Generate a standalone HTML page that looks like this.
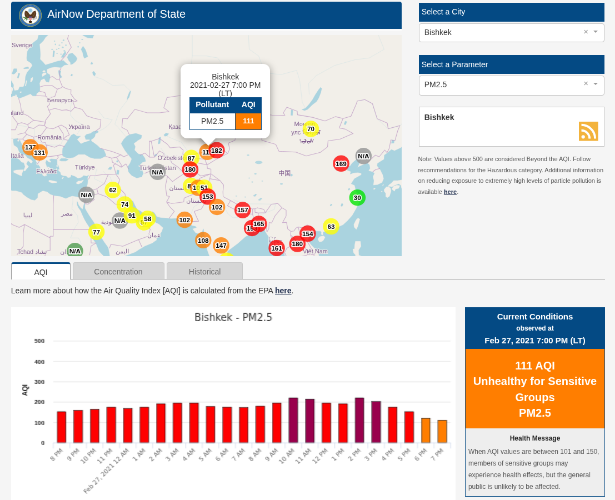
<!DOCTYPE html>
<html lang="en"><head><meta charset="utf-8"><title>AirNow Department of State</title>
<style>
html,body{margin:0;padding:0;}
html{width:615px;height:500px;overflow:hidden;}
body{width:615px;height:500px;overflow:hidden;background:#f5f5f5;font-family:"Liberation Sans", Arial, sans-serif;color:#333;}
#w{position:absolute;left:0;top:0;width:1107px;height:900px;transform:scale(0.555556);transform-origin:0 0;will-change:transform;overflow:hidden;}
#w div{box-sizing:border-box;}
.abs{position:absolute;}
.hd{position:absolute;background:#044a84;color:#fff;}
.sel{position:absolute;background:#fff;border:1.3px solid #c2c2c2;border-radius:4px;}
.tab{position:absolute;border:1px solid #c8c8c8;border-bottom:none;border-radius:4px 4px 0 0;background:#d6d6d6;color:#6a6a6a;font-size:14px;text-align:center;}
</style></head><body><div id="w">
<div class="hd" style="left:19.62px;top:2.88px;width:703.08px;height:49.14px;border-radius:4px 4px 0 0;"></div>
<div class="abs" style="left:19.62px;top:52.02px;width:703.08px;height:4.14px;background:#fafafa;"></div>
<svg class="abs" style="left:34.019999999999996px;top:7.02px" width="41.4" height="41.4" viewBox="-21 -21 42 42">
<circle r="20.3" fill="#2c68ae" stroke="#9aa45e" stroke-width="1.1"/>
<circle r="18" fill="none" stroke="#5d8fc8" stroke-width="2.2" stroke-dasharray="1.1 1.3"/>
<circle r="15.6" fill="#fdfdfd" stroke="#b9b36a" stroke-width="0.9"/>
<circle cy="-8.8" r="3.9" fill="#a9d3e8"/><circle cy="-8.8" r="2.2" fill="#8fc4e0"/>
<path d="M-2.2 -2.5 C-3.5 -6 -6 -8.6 -9.6 -8.2 C-11.2 -5 -11 0 -9 3.2 C-7.2 5.6 -4.6 5.8 -2.6 4.6 Z" fill="#5a3a1f"/>
<path d="M2.2 -2.5 C3.5 -6 6 -8.6 9.6 -8.2 C11.2 -5 11 0 9 3.2 C7.2 5.6 4.6 5.8 2.6 4.6 Z" fill="#5a3a1f"/>
<path d="M-9.6 -8.2 C-8 -4 -6.5 0 -4 3 M9.6 -8.2 C8 -4 6.5 0 4 3" stroke="#8a6a45" stroke-width="0.8" fill="none"/>
<path d="M-2.6 -3 h5.2 v8 l-2.6 7 l-2.6 -7 z" fill="#4a2f18"/>
<ellipse cx="0" cy="-3.2" rx="1.9" ry="2.1" fill="#f4f1ea"/><path d="M0.8 -3.2 l2.2 0.7 l-2.2 0.6z" fill="#d9a93a"/>
<path d="M-2.9 2 h5.8 v3.8 c0 2.3 -2.9 3.6 -2.9 3.6 s-2.9 -1.3 -2.9 -3.6 z" fill="#e2625c"/>
<path d="M-1.75 4 v4.4 M-0.6 4 v5 M0.6 4 v5 M1.75 4 v4.4" stroke="#f6e7e4" stroke-width="0.5"/>
<rect x="-2.9" y="2" width="5.8" height="2" fill="#34478f"/>
<path d="M-4 7 C-7 6.5 -10 5.5 -13 3 M-6 6.4 l-1.5 -2.6 M-8.2 5.6 l-1.8 -2.2 M-10.4 4.6 l-2 -1 M-6.6 6.6 l-1 2 M-9 5.6 l-1.6 1.8" stroke="#4a7f3c" stroke-width="1.2" fill="none" stroke-linecap="round"/>
<path d="M4 7.4 L12.5 3.2 M4.6 8.2 L13 5 M4 6.6 L11.6 1.6" stroke="#8d8d8d" stroke-width="0.7" fill="none"/>
<path d="M-3 10.5 h6 l-1 3.2 h-4z" fill="#3c2714"/>
</svg>
<div style="position:absolute;left:85.14px;top:11.75px;font-size:20px;line-height:26px;white-space:nowrap;color:#fff;">AirNow Department of State</div>
<div class="abs" style="left:19.62px;top:63.0px;width:703.08px;height:398.34px;overflow:hidden;background:#f2efe9;">
<svg width="703.08" height="398.34" viewBox="10.9 35.0 390.6 221.3" style="position:absolute;left:0;top:0;display:block">
<rect x="10.9" y="35.0" width="390.6" height="221.3" fill="#f2efe9"/>
<path d="M125.7 136.7L117.8 127.4L114.6 124.1L119.4 110.3L127.2 100.0L129.4 90.2L123.9 84.9L112.4 85.4L102.3 79.2L94.2 76.6M98.2 131.2L102.6 129.3L108.3 125.0L112.1 119.7L103.6 117.8L98.2 110.8M76.7 134.4L79.6 129.8L84.9 128.4L83.0 125.0L75.1 120.7L70.4 115.3L70.4 107.7L71.6 100.4M166.8 136.2L173.1 139.0L181.0 142.1L189.9 154.3L200.6 158.9M160.5 147.8L166.8 157.2L173.1 164.7L182.6 173.2L193.0 174.4M192.1 20.4L192.1 55.9L206.0 55.9L217.4 57.9L226.8 71.6L236.3 91.8L238.8 101.0M192.1 55.9L189.9 73.4L198.4 81.1L206.0 91.8L217.0 106.2L227.5 115.8L238.8 127.4M247.4 20.4L249.0 49.3L258.4 55.9L264.8 72.8L267.9 86.2L262.9 98.8M264.8 72.8L280.6 74.6L296.4 70.4L299.5 80.5L302.1 102.5L305.2 108.3M372.2 20.4L383.9 49.3L369.1 57.9L354.5 59.8L334.3 65.5L315.7 75.8L308.4 83.4L309.0 94.5M407.0 115.3L400.4 125.5L387.7 128.8L377.0 118.8L372.2 103.6L364.6 99.6L358.0 101.0M264.1 226.1L257.5 217.4L260.0 215.0L274.2 209.3L275.2 204.2L261.6 203.9L242.6 203.9L233.2 199.5M257.8 225.0L252.4 220.9L239.5 217.1L232.8 217.8L227.8 213.9L221.2 201.7M187.3 222.6L189.9 215.7L193.7 206.8L198.4 203.9L200.0 192.1L202.5 186.4L211.0 180.6M127.0 199.9L123.8 197.7L117.8 192.1L114.3 189.1L110.2 177.5L102.6 171.2M123.8 197.7L114.0 194.0L108.3 186.4L102.0 182.6L94.1 178.7L96.6 168.8M72.6 196.2L72.6 201.3L71.7 208.6L77.3 215.7L78.0 222.6L73.6 229.5L70.4 237.9L78.3 237.9L81.1 243.9L76.7 250.9L79.9 256.4M67.6 140.3L62.5 139.9L60.3 145.2L45.7 144.8L38.8 142.1L34.0 139.0L34.0 128.4L27.7 126.9L16.7 125.0" fill="none" stroke="#aad3df" stroke-width="0.45" stroke-opacity="0.32" stroke-linejoin="round"/>
<path d="M38.9 33.0L37.3 39.5L32.5 43.0L29.4 47.9L27.2 51.3L26.5 57.9L26.9 60.5L31.0 63.1L32.2 65.6L30.0 68.7L26.9 72.4L25.3 76.6L24.9 82.2L23.5 86.5L22.3 87.0L19.4 87.0L18.0 90.2L14.2 90.7L13.1 87.5L13.3 84.9L10.2 79.4L8.2 74.8L5.7 73.6L6.7 97.9L9.5 97.9L12.9 95.9L16.0 95.4L18.7 98.4L24.0 96.4L30.2 93.8L32.5 95.9L35.7 95.9L36.5 93.3L39.5 91.2L39.7 87.5L39.2 83.2L40.6 80.0L44.0 78.3L46.0 81.6L48.6 82.2L49.7 77.7L49.6 74.8L46.8 73.0L46.5 69.3L50.6 67.5L54.7 66.8L61.0 67.5L64.2 65.0L67.9 64.6L65.7 63.1L63.2 60.5L57.8 61.1L51.5 63.1L45.2 65.0L43.0 62.4L39.8 59.2L40.1 54.6L39.8 49.3L39.2 44.4L43.0 40.9L45.2 37.4L49.9 33.0ZM11.7 73.6L13.6 68.7L16.4 68.7L16.7 71.2L14.5 73.6L13.0 74.2ZM17.1 77.7L18.3 73.0L19.6 73.6L18.1 78.3ZM23.1 68.1L27.8 66.8L28.8 68.4L24.0 68.7ZM70.5 64.6L72.7 63.7L75.8 61.1L76.8 58.6L75.8 56.6L72.1 53.0L68.6 54.0L67.0 57.3L68.6 60.5L70.2 62.4ZM84.1 58.2L87.5 56.6L86.3 52.6L85.0 49.3L82.8 46.2L80.9 49.3L82.5 52.6L83.1 55.9ZM80.9 32.2L82.5 35.2L87.2 37.7L92.3 38.1L93.5 35.2L98.3 32.2ZM58.1 70.6L60.7 70.9L60.0 74.2L61.7 77.2L59.8 77.7L58.8 74.8ZM92.3 72.4L93.5 71.2L95.4 73.6L94.5 76.0L92.9 74.8ZM61.0 57.3L62.9 54.0L65.1 51.3L65.7 53.3L63.2 57.3ZM52.5 56.6L53.1 50.6L54.4 51.3L53.7 56.6ZM70.5 75.7L71.4 73.9L72.4 74.8L71.7 76.0ZM90.4 64.0L91.3 62.1L92.6 63.1L92.0 64.3ZM127.5 96.3L129.4 91.9L130.7 90.7L129.8 94.0L128.8 97.3L126.9 99.5ZM62.5 148.3L64.4 145.6L67.9 140.3L71.0 135.3L73.6 133.9L76.7 136.2L80.2 136.2L76.7 139.4L79.9 143.0L80.8 143.9L84.6 142.1L89.4 140.8L89.7 139.4L85.6 139.4L84.6 136.2L86.2 134.4L90.3 133.5L92.8 131.6L97.3 130.9L98.2 132.1L95.0 133.9L94.7 136.2L93.2 138.1L90.9 139.6L90.9 140.8L93.2 142.5L97.3 145.6L99.5 147.8L103.6 150.0L105.5 154.3L105.5 156.0L100.4 158.5L94.1 158.5L89.4 157.2L84.6 154.3L78.3 154.3L73.6 157.2L68.8 158.1L66.0 157.7L62.5 156.0L62.2 152.1ZM59.3 160.2L60.9 158.5L65.3 158.5L68.2 159.5L65.7 161.0L60.9 161.0ZM163.6 134.9L165.8 133.0L168.4 133.7L166.8 135.8L164.6 136.2ZM157.9 143.9L158.9 137.6L160.5 137.1L159.8 143.4ZM154.1 155.5L155.7 153.9L157.0 154.7L155.4 156.4ZM301.7 109.5L305.2 108.3L309.0 104.1L312.2 99.9L315.3 94.5L318.5 89.6L320.4 87.3L321.5 88.5L320.4 92.9L318.5 97.8L316.3 101.5L312.2 104.6L310.6 106.2L307.4 109.3L304.3 110.5ZM290.7 115.3L291.0 109.8L292.6 110.3L292.3 115.3ZM265.4 116.8L267.3 115.3L269.2 116.1L267.6 117.3ZM343.8 124.3L345.0 121.2L346.6 121.7L345.4 124.6ZM391.2 143.2L391.8 139.9L394.0 140.3L393.7 143.0ZM288.8 175.2L290.7 173.8L292.6 175.0L291.0 176.3ZM340.6 206.0L341.6 203.2L342.8 204.2L341.9 206.4ZM347.9 189.8L348.8 187.9L349.8 189.1L348.8 190.2ZM352.9 197.7L353.9 195.8L355.2 196.9L354.2 197.8ZM329.9 205.7L330.8 203.9L331.8 204.6L330.8 206.0ZM107.7 169.2L109.6 167.0L111.8 167.2L110.8 169.6ZM116.2 174.0L116.9 170.0L118.8 170.4L118.4 174.4ZM116.2 161.8L116.9 160.2L118.1 161.4L117.2 162.2ZM78.9 168.8L79.2 166.7L80.5 167.2L80.2 168.8ZM259.1 199.1L260.7 198.0L261.9 198.8L260.3 199.5ZM254.3 195.1L255.3 194.1L256.5 194.7L255.3 195.4ZM237.3 128.4L239.5 126.9L242.3 127.4L240.1 128.6ZM230.9 136.7L232.2 135.1L233.5 136.0L231.9 137.1ZM5.6 136.7L12.9 139.0L17.6 138.5L17.0 140.8L17.9 142.1L19.5 139.9L22.0 145.2L25.8 147.8L31.2 151.7L35.3 154.7L35.3 157.2L35.3 161.0L37.2 163.9L39.4 166.7L40.7 169.6L41.3 172.0L42.3 175.6L44.8 176.7L45.7 175.6L47.0 176.7L46.1 173.2L48.3 172.0L49.9 172.0L49.9 170.0L46.7 166.7L46.4 165.5L45.4 162.7L46.4 160.2L48.0 161.8L49.9 162.7L51.1 161.8L49.2 159.7L51.1 158.9L55.9 159.3L56.8 160.2L56.8 162.4L56.8 164.7L58.1 165.5L59.0 169.2L57.1 169.6L60.0 172.4L60.6 174.8L63.1 176.0L66.0 176.3L67.6 177.9L70.4 177.5L71.0 175.2L75.1 176.7L77.7 178.5L81.5 177.5L83.4 175.6L86.5 176.3L88.4 175.2L87.1 177.9L87.5 180.6L87.1 184.5L86.2 186.8L84.6 191.0L83.7 194.0L82.4 196.6L80.8 197.3L76.1 196.6L72.0 195.8L68.8 196.9L65.7 198.4L60.0 196.2L53.6 195.4L49.9 194.0L47.0 191.7L42.6 190.6L37.5 193.6L37.2 197.7L34.7 200.2L30.9 199.5L26.5 196.9L22.7 194.0L22.0 192.5L15.7 190.6L11.9 190.6L9.1 189.5L5.6 188.3ZM76.9 201.5L77.0 205.0L78.3 207.8L80.2 210.3L80.8 211.4L82.4 215.3L84.6 219.9L86.5 223.0L90.6 229.5L91.9 234.6L91.6 237.6L95.7 243.0L98.8 250.9L101.1 253.5L105.2 257.7L109.6 257.7L109.0 253.5L108.0 248.2L107.1 246.6L103.3 241.3L99.8 235.6L96.9 231.2L96.3 227.8L93.5 222.3L90.9 218.5L88.7 215.3L86.2 211.1L84.6 208.2L84.6 203.2L84.0 203.5L82.4 209.5L80.2 207.5L78.3 205.0L77.3 202.1ZM119.4 259.4L124.1 256.4L129.2 254.5L135.2 252.2L139.0 249.6L144.7 246.3L151.9 243.3L156.7 240.0L156.4 237.3L159.5 234.9L161.7 231.5L163.0 227.8L158.9 224.0L153.2 221.2L152.3 218.8L152.3 217.1L152.4 214.4L151.9 215.0L151.0 216.4L148.8 218.1L145.9 220.9L144.7 221.9L141.5 222.3L138.3 222.3L136.4 220.5L137.1 219.2L137.1 216.4L135.8 215.3L134.7 217.1L134.6 220.2L133.0 218.1L132.7 214.2L131.1 212.1L128.2 210.0L127.6 206.8L125.7 203.5L125.7 201.3L128.5 200.2L129.5 199.9L132.7 201.3L134.6 205.3L136.8 209.3L140.2 211.1L142.8 213.2L146.2 213.9L147.5 213.9L151.9 211.6L154.1 212.8L156.7 216.9L160.5 217.8L165.5 218.1L170.9 218.8L174.7 218.5L178.2 218.5L183.5 217.8L185.8 219.9L187.0 223.0L189.5 224.0L191.8 225.7L195.2 226.4L196.2 227.4L192.1 228.8L195.2 232.9L198.4 233.9L201.9 232.2L203.1 228.8L203.8 232.9L204.1 239.6L205.7 245.3L207.2 251.2L210.4 259.7L227.8 259.7L227.2 254.5L227.5 251.2L230.6 248.9L234.1 246.3L237.3 243.9L245.2 236.9L248.0 235.3L249.0 231.2L253.7 230.9L258.4 229.5L260.3 227.8L264.1 228.5L264.8 231.5L267.6 235.9L271.1 241.3L272.0 249.6L275.8 250.2L278.4 247.9L280.6 246.3L282.5 247.9L284.4 256.1L285.3 259.7L287.8 259.7L289.7 258.7L290.4 258.1L291.9 257.7L292.9 258.4L292.9 259.7L319.4 259.7L319.1 256.8L318.2 251.9L316.0 249.2L314.1 247.9L310.9 244.6L308.1 240.6L308.7 236.9L311.2 233.6L315.3 231.2L320.1 231.2L321.0 232.2L320.7 234.2L322.0 235.3L323.2 234.6L322.9 232.2L326.4 231.2L332.7 229.2L334.9 228.5L342.8 225.0L347.3 220.9L352.0 215.7L356.1 208.6L359.3 201.7L356.4 200.2L359.3 197.7L358.9 195.1L356.1 191.7L354.5 185.3L351.0 183.7L354.2 178.7L361.2 174.8L361.2 173.2L357.7 172.4L353.3 172.8L350.1 174.0L350.7 171.6L346.9 170.0L346.3 166.7L350.1 165.9L352.0 163.1L356.4 159.3L359.6 159.7L360.2 161.0L357.1 167.6L359.6 166.3L366.9 163.1L369.1 164.7L369.7 168.4L368.1 170.8L372.2 172.0L374.1 173.2L372.5 176.7L373.5 180.6L372.9 185.3L377.3 184.9L382.0 182.6L383.6 178.7L382.7 174.8L380.1 169.6L377.0 165.9L377.3 163.5L378.5 162.7L383.9 159.3L384.2 155.1L387.1 153.0L391.2 149.6L394.3 150.9L400.7 147.8L407.0 141.2L407.0 269.0L119.4 269.0ZM130.0 134.5L135.7 133.4L141.3 135.3L140.9 138.3L137.0 140.7L133.5 143.5L135.0 146.7L134.2 150.0L138.1 154.0L142.2 154.8L144.6 158.1L145.4 161.3L142.2 162.2L139.7 164.6L141.3 168.7L143.0 173.5L141.3 176.8L136.5 177.9L131.6 175.5L128.3 171.9L127.5 167.0L130.0 163.0L131.6 158.9L128.3 154.8L125.1 150.8L122.6 146.7L121.0 143.5L123.5 139.4L126.7 136.1Z" fill="#aad3df" stroke="#aad3df" stroke-width="0.3" stroke-linejoin="round"/>
<ellipse cx="247.9" cy="155.1" rx="1.2" ry="0.7" fill="#aad3df" fill-opacity="0.85"/><ellipse cx="258.5" cy="162.4" rx="3.6" ry="1.6" fill="#aad3df" fill-opacity="0.85"/><ellipse cx="255.2" cy="173.8" rx="1.2" ry="0.8" fill="#aad3df" fill-opacity="0.85"/><ellipse cx="254.4" cy="195.7" rx="1.3" ry="0.8" fill="#aad3df" fill-opacity="0.85"/><ellipse cx="259.3" cy="199.8" rx="1.2" ry="0.7" fill="#aad3df" fill-opacity="0.85"/><ellipse cx="281.2" cy="183.9" rx="1.4" ry="0.8" fill="#aad3df" fill-opacity="0.85"/><ellipse cx="55.2" cy="44.4" rx="0.7" ry="0.8" fill="#aad3df" fill-opacity="0.85"/><ellipse cx="58.4" cy="48.4" rx="0.9" ry="0.55" fill="#aad3df" fill-opacity="0.85"/><ellipse cx="61.7" cy="42.8" rx="0.7" ry="0.55" fill="#aad3df" fill-opacity="0.85"/><ellipse cx="64.1" cy="50.9" rx="0.9" ry="0.8" fill="#aad3df" fill-opacity="0.85"/><ellipse cx="56.8" cy="53.3" rx="0.7" ry="0.55" fill="#aad3df" fill-opacity="0.85"/><ellipse cx="51.9" cy="49.3" rx="0.9" ry="0.55" fill="#aad3df" fill-opacity="0.85"/><ellipse cx="65.7" cy="45.2" rx="0.7" ry="0.8" fill="#aad3df" fill-opacity="0.85"/><ellipse cx="60.8" cy="54.1" rx="0.9" ry="0.55" fill="#aad3df" fill-opacity="0.85"/><ellipse cx="54.3" cy="41.1" rx="0.7" ry="0.55" fill="#aad3df" fill-opacity="0.85"/><ellipse cx="63.3" cy="40.3" rx="0.9" ry="0.8" fill="#aad3df" fill-opacity="0.85"/><ellipse cx="79.5" cy="42.8" rx="0.7" ry="0.55" fill="#aad3df" fill-opacity="0.85"/><ellipse cx="82.0" cy="39.5" rx="0.9" ry="0.55" fill="#aad3df" fill-opacity="0.85"/><ellipse cx="77.9" cy="46.8" rx="0.7" ry="0.8" fill="#aad3df" fill-opacity="0.85"/><ellipse cx="59.2" cy="45.2" rx="0.9" ry="0.55" fill="#aad3df" fill-opacity="0.85"/><ellipse cx="56.5" cy="49.3" rx="0.7" ry="0.55" fill="#aad3df" fill-opacity="0.85"/><ellipse cx="62.5" cy="47.3" rx="0.9" ry="0.8" fill="#aad3df" fill-opacity="0.85"/><ellipse cx="252" cy="182" rx="0.8" ry="0.6" fill="#aad3df" fill-opacity="0.85"/><ellipse cx="249" cy="178" rx="0.7" ry="0.5" fill="#aad3df" fill-opacity="0.85"/><ellipse cx="262" cy="181" rx="0.7" ry="0.5" fill="#aad3df" fill-opacity="0.85"/><ellipse cx="245" cy="197" rx="0.8" ry="0.5" fill="#aad3df" fill-opacity="0.85"/><ellipse cx="236" cy="196" rx="0.7" ry="0.5" fill="#aad3df" fill-opacity="0.85"/>
<path d="M6.2 88.1L11.8 87.0L12.9 89.1L11.8 91.8L11.5 93.8L6.5 93.8ZM41.7 74.8L42.7 73.0L45.8 72.7L46.1 74.2L43.9 75.4L42.3 76.6ZM42.3 71.2L43.9 70.2L45.2 71.2L44.2 72.4L42.7 72.1ZM30.2 81.6L30.7 78.3L32.6 77.2L32.4 80.0L30.9 82.2ZM24.8 85.9L26.1 80.5L26.7 80.5L25.7 85.9ZM19.7 92.3L20.9 91.2L21.1 92.5L20.0 92.8ZM14.8 96.4L15.7 94.3L16.7 95.9L15.8 96.6ZM5.6 147.8L7.2 150.4L9.1 152.6L12.6 155.1L15.1 157.4L18.9 159.3L21.4 162.2L23.6 162.7L24.9 166.7L23.6 170.0L23.5 171.0L24.9 171.0L26.5 168.8L28.4 166.7L26.1 163.9L27.7 160.6L30.9 163.3L32.5 161.8L30.9 159.7L27.4 158.1L24.6 154.7L22.0 154.7L18.9 152.1L17.0 147.4L13.5 145.2L12.9 141.6L12.9 139.0L5.6 136.7ZM13.3 170.8L16.0 170.0L23.3 169.6L21.7 173.6L21.7 176.0L19.2 175.2L13.5 172.4ZM48.6 180.3L50.5 180.3L55.5 181.4L57.1 181.8L56.5 182.6L52.1 183.0L48.6 181.8ZM76.1 182.6L78.0 181.0L80.5 181.0L83.4 179.9L81.5 182.6L78.3 184.1L76.4 183.7ZM61.5 178.1L63.1 176.9L63.3 177.5L62.0 179.1ZM46.7 167.0L48.0 166.7L50.5 168.4L51.7 170.8L50.5 170.6L48.6 168.6ZM55.9 165.9L57.1 165.1L58.1 166.3L56.8 166.7ZM55.9 169.8L56.2 168.4L56.8 168.8L56.6 170.0ZM35.9 163.7L36.9 163.5L37.5 165.1L36.9 165.1ZM38.5 170.4L38.9 169.0L39.7 170.0L39.1 170.6ZM317.5 239.0L319.1 242.0L321.7 241.6L323.2 240.3L324.8 237.3L323.6 235.9L320.7 236.3L319.1 236.9ZM358.0 218.1L359.6 219.2L357.7 226.1L356.1 229.5L353.9 227.1L353.6 224.4L355.5 220.5L356.7 218.8ZM355.2 241.3L360.2 241.3L360.8 246.3L358.3 250.2L358.6 255.1L361.2 256.1L362.7 257.7L361.2 261.0L355.2 261.0L355.2 254.8L353.3 252.8L352.6 248.9L354.2 248.9L354.5 244.6ZM383.9 189.5L386.1 186.8L388.0 186.8L390.2 187.9L390.9 191.0L389.3 196.2L387.1 197.7L385.5 196.6L385.5 193.2L383.9 191.3ZM387.7 186.4L388.7 184.9L391.2 183.0L393.4 180.6L397.5 180.5L401.3 179.9L403.5 179.9L404.1 177.5L407.0 174.0L407.0 184.5L403.8 186.4L401.3 188.3L400.7 185.3L398.5 183.7L394.3 185.3L391.8 186.8L389.6 186.4ZM391.5 189.1L393.4 186.2L396.6 185.1L399.7 185.7L398.5 188.3L395.3 189.1L394.3 191.2L392.8 190.2ZM372.9 189.1L374.1 188.1L375.2 188.5L374.1 189.5ZM357.4 194.9L359.3 195.8L358.0 195.6ZM359.6 201.3L360.5 200.6L360.8 201.3L359.9 201.7ZM148.8 213.4L151.6 212.1L151.9 212.5L149.7 213.7ZM133.4 216.0L133.9 214.8L134.1 216.0ZM159.2 235.6L160.2 234.1L160.3 234.6L159.5 235.8ZM382.3 186.0L382.8 183.9L383.3 184.1L382.8 186.0ZM380.8 191.7L381.7 190.8L382.2 191.3L381.2 191.9Z" fill="#f2efe9" stroke="#f2efe9" stroke-width="0.2" stroke-linejoin="round"/>
<path d="M49.0 23.9L47.4 33.0M60.4 61.1L65.1 55.9L71.1 47.2L67.3 38.8L68.9 33.0M61.0 67.8L59.1 71.2L59.8 77.7L59.2 79.4M49.3 77.4L52.5 76.6L56.4 79.4L59.2 79.4L62.1 86.5L61.5 87.5M39.5 87.0L45.0 85.4L51.6 85.4L57.1 89.1L61.5 87.5L62.1 86.5L66.0 88.6L70.8 89.7L70.6 93.8L74.1 98.9L77.0 100.9L72.9 101.9L74.5 107.3L70.7 111.3L66.3 109.8L61.5 110.3L54.6 108.3L48.6 110.3M57.1 89.1L54.6 96.4L47.8 98.2L49.4 104.4L47.2 106.3L48.6 110.3L50.2 113.8L45.4 120.2L44.2 125.5M35.6 95.6L45.5 96.1L47.8 98.2M39.4 91.2L44.7 92.5L45.5 96.1M18.4 98.4L20.3 104.8L21.4 112.8L12.2 116.3L17.6 123.6L21.4 122.7L27.4 124.6L33.4 120.2L28.4 116.3L21.4 112.8M33.4 120.2L45.4 122.2L44.2 125.5L38.8 125.0L33.4 128.4L28.4 127.4L27.4 124.6M5.6 129.8L15.1 129.8L17.6 123.6M28.4 127.4L24.9 132.6L26.5 134.4L33.4 137.1L38.2 136.2L41.0 134.9L46.4 127.7L44.2 125.5M17.3 134.4L24.9 132.6M17.0 139.0L22.4 139.0L26.5 134.4M46.4 127.7L52.7 128.8L58.1 126.2L63.1 133.9L63.1 139.2L67.9 140.3M58.1 126.2L60.9 125.0L66.0 127.9L69.1 134.9L65.5 136.7L63.1 139.2M38.2 136.2L41.6 142.1L45.1 142.5L45.7 144.8L46.5 146.5M45.7 144.8L54.3 147.2L59.3 145.0L64.4 146.7M33.4 137.1L34.0 141.6L35.9 145.6L34.7 147.8L38.2 150.9L39.1 154.7L44.8 153.0L46.5 146.5L44.8 153.0L46.4 157.0L57.1 155.5L62.5 154.3M22.4 139.0L23.9 140.3L27.4 140.3L34.0 141.6M24.6 145.6L29.6 150.0L32.5 152.1L34.7 147.8M35.3 154.7L37.5 152.1L39.1 154.7L40.4 159.1L37.2 163.9M40.4 159.1L46.4 157.0L57.1 155.5L58.1 157.2L56.2 159.7M74.5 107.3L81.8 109.3L86.5 115.8L94.1 118.3L100.7 119.7L99.8 127.9L94.7 131.6M100.4 148.3L112.4 151.7L120.6 154.7L123.5 156.8L127.6 154.9M105.3 156.4L111.5 158.1L116.2 157.2L120.6 154.7M111.5 158.1L112.1 162.2L115.6 163.9L113.1 165.1L114.6 169.6L115.6 174.0L108.0 174.4L103.6 174.4L95.7 175.4L90.0 175.6L88.3 179.3M116.2 157.2L121.0 164.7L121.0 167.2L125.7 163.9L128.5 169.0M115.6 163.9L121.0 167.2M115.6 174.0L119.4 179.5L117.5 186.4L124.8 194.0L125.7 201.3M108.0 174.4L104.2 183.4L96.6 188.7L87.8 191.7L86.5 189.3L84.9 189.8M96.6 188.7L97.9 193.6L90.9 195.8L94.1 199.5L87.8 204.2L84.5 203.7M97.9 193.6L106.7 196.9L115.3 204.2L121.0 204.6L124.8 206.8L127.0 206.8M121.0 204.6L123.8 201.0L125.7 201.3M82.2 196.9L84.5 203.2M86.2 192.5L86.4 195.8L84.6 202.8M53.5 195.3L53.0 204.2L53.0 229.5L53.0 236.3L49.9 236.3L49.9 237.9L49.9 250.5L46.4 250.9L43.5 259.4M53.0 229.5L73.6 229.5L78.9 229.7L81.8 229.5L90.6 229.5M49.9 237.9L24.3 224.5L21.4 226.1L18.9 227.4L11.6 224.4L4.0 214.2M24.3 224.5L23.0 232.9L23.0 246.3L16.7 254.8M90.6 229.5L90.9 243.0L96.0 243.0M89.4 255.1L90.9 245.9L96.0 243.0M109.3 248.2L110.5 244.6L114.3 244.9L122.5 246.3L138.3 239.6L147.8 236.3L150.0 229.5L148.5 227.1L140.2 226.2L137.1 222.3L135.2 220.5M138.3 239.6L141.8 247.4M148.5 227.1L151.0 222.3L152.1 219.3M144.4 173.4L151.6 170.4L158.6 172.4L167.3 176.3L165.2 186.0L166.5 195.8L169.3 196.4L166.3 201.9L169.3 206.4L174.1 211.4L168.7 218.5M167.3 176.3L172.2 181.6L177.9 177.5L184.2 173.4L188.3 174.0L193.0 174.4L195.9 172.4L200.3 176.0L210.7 173.8L199.3 178.3L199.0 185.3L194.9 186.4L193.0 194.3L183.9 198.0L183.5 201.9L171.5 203.5L166.3 201.9M139.8 155.3L144.7 153.0L149.2 157.2L154.1 157.2L151.0 141.2L159.2 138.5L166.8 143.9L170.0 147.8L179.4 146.9L182.9 150.0L182.6 154.3L188.9 158.1L195.9 153.4L198.4 153.0M154.1 157.2L159.2 150.9L163.6 153.4L163.9 156.8L169.6 158.1L171.5 162.7L177.9 167.2L184.2 173.4M149.2 157.2L149.1 141.2L151.0 141.2M188.3 174.0L190.2 170.0L187.0 165.9L190.8 164.3L196.8 162.7L197.1 158.5L192.4 156.8L195.9 153.4M196.8 162.7L206.8 164.9L207.2 168.4L210.7 169.0L210.7 173.8M197.1 158.5L204.7 159.3L206.8 164.9M198.4 153.0L206.3 152.6L208.8 149.1L213.6 150.4L224.0 150.9L227.5 153.4M206.8 164.9L217.0 158.7L227.5 153.4L229.4 149.1L228.1 143.0L234.7 140.3L236.3 131.2L244.2 131.9L251.5 121.7L249.9 121.9M121.6 127.4L122.5 118.3L127.0 118.8L134.6 109.3L146.9 112.8L159.2 112.8L168.7 111.6L163.6 107.7L166.8 97.5L180.1 95.6L189.5 91.8L197.8 90.1L206.3 97.5L215.8 96.2L220.2 101.0L227.2 113.8L237.6 112.8L243.3 119.7L249.9 121.9M129.2 134.9L127.0 130.2L121.6 127.4M251.5 121.7L264.8 114.3L272.0 115.1L284.7 115.3L283.1 112.8L286.6 107.2L297.0 111.3L297.3 114.8L312.2 117.3L324.8 121.0L335.2 116.6L342.8 118.5M251.5 121.7L261.3 136.7L261.6 140.3L275.5 144.3L278.7 151.3L295.7 152.1L305.9 156.0L320.1 152.4L327.3 146.9L327.8 140.8L339.7 139.2L352.9 133.5L345.0 129.1L339.0 127.9L342.8 118.5M342.8 118.5L350.7 116.3L355.8 104.6L357.1 101.0L364.6 99.6L372.2 103.6L377.0 118.8L387.1 123.1L387.9 128.8L399.7 125.5L397.5 130.7L394.7 140.8L390.6 139.9L389.0 148.3L386.8 152.6M386.8 152.6L384.5 150.0L378.9 156.8L375.1 155.1L367.0 162.9M372.5 171.8L375.4 169.6L379.7 168.4M210.7 173.8L219.9 180.6L223.4 185.1L222.7 191.7L222.9 196.6L230.3 200.6L236.3 203.9L245.2 207.8L252.4 208.9L254.7 208.6L257.2 207.8L263.5 209.3L265.1 212.7L271.1 204.2L277.7 203.5L281.7 207.7L285.9 210.2L285.9 216.0L282.3 222.6L286.3 222.3L287.5 229.0L290.7 231.4L293.7 231.0L295.7 228.0L298.0 226.9L302.7 227.8L307.0 225.0L311.2 226.8L311.5 229.5L315.3 231.0M210.7 173.8L209.5 178.7L219.9 180.6M209.5 178.7L207.2 184.9L210.4 192.1L209.1 197.7L204.7 202.8L201.2 208.9L194.0 211.4L196.2 216.7L198.4 221.2L191.4 221.6L189.5 223.7M230.3 200.6L227.2 205.7L237.3 210.9L245.2 213.5L252.4 214.2L252.4 208.9M254.7 208.6L254.8 212.3L258.1 213.0L265.1 212.7M252.4 214.2L253.4 218.5L255.3 229.5M253.4 218.5L257.8 218.1L266.0 219.2L262.2 224.0L265.7 223.7L266.7 231.9M257.8 218.1L258.1 213.0M281.7 207.7L274.9 215.7L271.4 223.0L268.9 222.5L268.6 228.8L266.7 231.9M290.7 231.4L290.4 235.1L293.2 244.6L286.6 248.2L284.4 252.5L287.5 259.4M290.4 235.1L293.8 237.9L291.9 244.9L293.2 244.6M293.8 237.9L296.7 242.3L302.7 242.0L305.1 247.9L307.7 254.1L306.5 255.1L298.0 257.4L298.6 259.7M298.0 226.9L299.5 233.6L305.5 235.3L302.4 238.6L306.5 240.6L314.1 253.8L313.8 254.8L307.7 254.1M313.8 254.8L313.8 259.7" fill="none" stroke="#bf9cc6" stroke-width="0.6" stroke-opacity="0.8" stroke-linejoin="round"/>
<g font-family='"Liberation Sans","DejaVu Sans","Noto Sans CJK SC",sans-serif' font-size="6.1" fill="#7d5a8c" stroke="#f4f1ec" stroke-width="1.2" stroke-opacity="0.8" paint-order="stroke" style="paint-order:stroke">
<text x="11.4" y="47.2" text-anchor="start">Sverige</text>
<text x="46.9" y="102" text-anchor="start">Беларусь</text>
<text x="23.4" y="114.8" text-anchor="end">Deutschland</text>
<text x="68.2" y="129" text-anchor="start">Україна</text>
<text x="37.2" y="139.6" text-anchor="start">România</text>
<text x="23.4" y="158" text-anchor="end">Italia</text>
<text x="36" y="173.4" text-anchor="start">Ελλάδα</text>
<text x="74.7" y="169.7" text-anchor="start">Türkiye</text>
<text x="168.5" y="128.8" text-anchor="start">Қазақстан</text>
<text x="157.3" y="159.9" text-anchor="start">O'zbekiston</text>
<text x="138.9" y="169.9" text-anchor="start">Türkmenistan</text>
<text x="169" y="190" text-anchor="start">افغانستان</text>
<text x="186" y="203" text-anchor="start">پاکستان</text>
<text x="100.7" y="224" text-anchor="start">السعودية</text>
<text x="147" y="237.3" text-anchor="start">عمان</text>
<text x="115.3" y="253.5" text-anchor="start">اليمن</text>
<text x="23" y="217.2" text-anchor="start">ليبيا</text>
<text x="60.7" y="215.3" text-anchor="start">مصر</text>
<text x="17" y="253.7" text-anchor="start">Tchad تشاد</text>
<text x="60" y="253.7" text-anchor="start">السودان</text>
<text x="294" y="126.3" text-anchor="start">Монгол</text>
<text x="291" y="134.3" text-anchor="start">улс ᠮᠣᠩᠭᠣᠯ</text>
<text x="299" y="143.5" text-anchor="start">ᠤᠯᠤᠰ</text>
<text x="278.3" y="175.5" text-anchor="start">中国</text>
<text x="302.6" y="253.3" text-anchor="start">Việt Nam</text>
<text x="268" y="243" text-anchor="start">မြန်မာ</text>
</g>
<g font-family='"Liberation Sans",Arial,sans-serif' font-size="6.55" font-weight="bold" text-anchor="middle">
<circle cx="226.6" cy="260.7" r="8.2" fill="#ffff00" fill-opacity="0.78"/>
<circle cx="74.7" cy="251" r="8.2" fill="#4c9a4c" fill-opacity="0.78"/>
<text x="74.7" y="253.4" fill="#000" stroke="#fff" stroke-width="2.2" stroke-opacity="0.92" stroke-linejoin="round" style="paint-order:stroke">N/A</text>
<circle cx="30.2" cy="147.2" r="8.2" fill="#ff7e00" fill-opacity="0.78"/>
<text x="30.2" y="149.6" fill="#000" stroke="#fff" stroke-width="2.2" stroke-opacity="0.92" stroke-linejoin="round" style="paint-order:stroke">137</text>
<circle cx="39.3" cy="152.4" r="8.2" fill="#ff7e00" fill-opacity="0.78"/>
<text x="39.3" y="154.8" fill="#000" stroke="#fff" stroke-width="2.2" stroke-opacity="0.92" stroke-linejoin="round" style="paint-order:stroke">131</text>
<circle cx="86.2" cy="194.8" r="8.2" fill="#999999" fill-opacity="0.85"/>
<text x="86.2" y="197.2" fill="#000" stroke="#fff" stroke-width="2.2" stroke-opacity="0.92" stroke-linejoin="round" style="paint-order:stroke">N/A</text>
<circle cx="112.6" cy="189.9" r="8.2" fill="#ffff00" fill-opacity="0.78"/>
<text x="112.6" y="192.3" fill="#000" stroke="#fff" stroke-width="2.2" stroke-opacity="0.92" stroke-linejoin="round" style="paint-order:stroke">62</text>
<circle cx="119.7" cy="220.6" r="8.2" fill="#999999" fill-opacity="0.85"/>
<text x="119.7" y="223.0" fill="#000" stroke="#fff" stroke-width="2.2" stroke-opacity="0.92" stroke-linejoin="round" style="paint-order:stroke">N/A</text>
<circle cx="124.5" cy="204.4" r="8.2" fill="#ffff00" fill-opacity="0.78"/>
<text x="124.5" y="206.8" fill="#000" stroke="#fff" stroke-width="2.2" stroke-opacity="0.92" stroke-linejoin="round" style="paint-order:stroke">74</text>
<circle cx="131.6" cy="215.3" r="8.2" fill="#ffff00" fill-opacity="0.78"/>
<text x="131.6" y="217.7" fill="#000" stroke="#fff" stroke-width="2.2" stroke-opacity="0.92" stroke-linejoin="round" style="paint-order:stroke">91</text>
<circle cx="143.8" cy="222.3" r="8.2" fill="#ffff00" fill-opacity="0.78"/>
<text x="143.8" y="224.7" fill="#000" stroke="#fff" stroke-width="2.2" stroke-opacity="0.92" stroke-linejoin="round" style="paint-order:stroke">57</text>
<circle cx="147.4" cy="218.7" r="8.2" fill="#ffff00" fill-opacity="0.78"/>
<text x="147.4" y="221.1" fill="#000" stroke="#fff" stroke-width="2.2" stroke-opacity="0.92" stroke-linejoin="round" style="paint-order:stroke">58</text>
<circle cx="96.2" cy="231.8" r="8.2" fill="#ffff00" fill-opacity="0.78"/>
<text x="96.2" y="234.2" fill="#000" stroke="#fff" stroke-width="2.2" stroke-opacity="0.92" stroke-linejoin="round" style="paint-order:stroke">77</text>
<circle cx="157.4" cy="171.8" r="8.2" fill="#999999" fill-opacity="0.85"/>
<text x="157.4" y="174.2" fill="#000" stroke="#fff" stroke-width="2.2" stroke-opacity="0.92" stroke-linejoin="round" style="paint-order:stroke">N/A</text>
<circle cx="191.1" cy="157.9" r="8.2" fill="#ffff00" fill-opacity="0.78"/>
<text x="191.1" y="160.3" fill="#000" stroke="#fff" stroke-width="2.2" stroke-opacity="0.92" stroke-linejoin="round" style="paint-order:stroke">87</text>
<circle cx="190" cy="169.4" r="8.2" fill="#ff0000" fill-opacity="0.78"/>
<text x="190" y="171.8" fill="#000" stroke="#fff" stroke-width="2.2" stroke-opacity="0.92" stroke-linejoin="round" style="paint-order:stroke">180</text>
<circle cx="207.1" cy="151.8" r="8.2" fill="#ff7e00" fill-opacity="0.78"/>
<text x="207.1" y="154.2" fill="#000" stroke="#fff" stroke-width="2.2" stroke-opacity="0.92" stroke-linejoin="round" style="paint-order:stroke">111</text>
<circle cx="216.4" cy="150.2" r="8.2" fill="#ff0000" fill-opacity="0.78"/>
<text x="216.4" y="152.6" fill="#000" stroke="#fff" stroke-width="2.2" stroke-opacity="0.92" stroke-linejoin="round" style="paint-order:stroke">182</text>
<circle cx="190.8" cy="185.9" r="8.2" fill="#ffff00" fill-opacity="0.78"/>
<text x="190.8" y="188.3" fill="#000" stroke="#fff" stroke-width="2.2" stroke-opacity="0.92" stroke-linejoin="round" style="paint-order:stroke">81</text>
<circle cx="198" cy="187.8" r="8.2" fill="#ff7e00" fill-opacity="0.78"/>
<text x="198" y="190.2" fill="#000" stroke="#fff" stroke-width="2.2" stroke-opacity="0.92" stroke-linejoin="round" style="paint-order:stroke">105</text>
<circle cx="204" cy="187.8" r="8.2" fill="#ffff00" fill-opacity="0.78"/>
<text x="204" y="190.2" fill="#000" stroke="#fff" stroke-width="2.2" stroke-opacity="0.92" stroke-linejoin="round" style="paint-order:stroke">51</text>
<circle cx="207.5" cy="196.5" r="8.2" fill="#ff0000" fill-opacity="0.78"/>
<text x="207.5" y="198.9" fill="#000" stroke="#fff" stroke-width="2.2" stroke-opacity="0.92" stroke-linejoin="round" style="paint-order:stroke">153</text>
<circle cx="184.4" cy="219.8" r="8.2" fill="#ff7e00" fill-opacity="0.78"/>
<text x="184.4" y="222.2" fill="#000" stroke="#fff" stroke-width="2.2" stroke-opacity="0.92" stroke-linejoin="round" style="paint-order:stroke">102</text>
<circle cx="216.8" cy="206.9" r="8.2" fill="#ff7e00" fill-opacity="0.78"/>
<text x="216.8" y="209.3" fill="#000" stroke="#fff" stroke-width="2.2" stroke-opacity="0.92" stroke-linejoin="round" style="paint-order:stroke">102</text>
<circle cx="242.4" cy="210" r="8.2" fill="#ff0000" fill-opacity="0.78"/>
<text x="242.4" y="212.4" fill="#000" stroke="#fff" stroke-width="2.2" stroke-opacity="0.92" stroke-linejoin="round" style="paint-order:stroke">157</text>
<circle cx="251.8" cy="228" r="8.2" fill="#ff0000" fill-opacity="0.78"/>
<text x="251.8" y="230.4" fill="#000" stroke="#fff" stroke-width="2.2" stroke-opacity="0.92" stroke-linejoin="round" style="paint-order:stroke">153</text>
<circle cx="258.6" cy="223.9" r="8.2" fill="#ff0000" fill-opacity="0.78"/>
<text x="258.6" y="226.3" fill="#000" stroke="#fff" stroke-width="2.2" stroke-opacity="0.92" stroke-linejoin="round" style="paint-order:stroke">165</text>
<circle cx="203" cy="240.2" r="8.2" fill="#ff7e00" fill-opacity="0.78"/>
<text x="203" y="242.6" fill="#000" stroke="#fff" stroke-width="2.2" stroke-opacity="0.92" stroke-linejoin="round" style="paint-order:stroke">108</text>
<circle cx="220.9" cy="245.4" r="8.2" fill="#ff7e00" fill-opacity="0.78"/>
<text x="220.9" y="247.8" fill="#000" stroke="#fff" stroke-width="2.2" stroke-opacity="0.92" stroke-linejoin="round" style="paint-order:stroke">147</text>
<circle cx="276.5" cy="248" r="8.2" fill="#ff0000" fill-opacity="0.78"/>
<text x="276.5" y="250.4" fill="#000" stroke="#fff" stroke-width="2.2" stroke-opacity="0.92" stroke-linejoin="round" style="paint-order:stroke">161</text>
<circle cx="297.2" cy="243.9" r="8.2" fill="#ff0000" fill-opacity="0.78"/>
<text x="297.2" y="246.3" fill="#000" stroke="#fff" stroke-width="2.2" stroke-opacity="0.92" stroke-linejoin="round" style="paint-order:stroke">180</text>
<circle cx="307.5" cy="233.6" r="8.2" fill="#ff0000" fill-opacity="0.78"/>
<text x="307.5" y="236.0" fill="#000" stroke="#fff" stroke-width="2.2" stroke-opacity="0.92" stroke-linejoin="round" style="paint-order:stroke">154</text>
<circle cx="330.9" cy="226.4" r="8.2" fill="#ffff00" fill-opacity="0.78"/>
<text x="330.9" y="228.8" fill="#000" stroke="#fff" stroke-width="2.2" stroke-opacity="0.92" stroke-linejoin="round" style="paint-order:stroke">63</text>
<circle cx="357.2" cy="197.6" r="8.2" fill="#00e400" fill-opacity="0.78"/>
<text x="357.2" y="200.0" fill="#000" stroke="#fff" stroke-width="2.2" stroke-opacity="0.92" stroke-linejoin="round" style="paint-order:stroke">30</text>
<circle cx="340.9" cy="163.5" r="8.2" fill="#ff0000" fill-opacity="0.78"/>
<text x="340.9" y="165.9" fill="#000" stroke="#fff" stroke-width="2.2" stroke-opacity="0.92" stroke-linejoin="round" style="paint-order:stroke">169</text>
<circle cx="363.3" cy="156" r="8.2" fill="#999999" fill-opacity="0.85"/>
<text x="363.3" y="158.4" fill="#000" stroke="#fff" stroke-width="2.2" stroke-opacity="0.92" stroke-linejoin="round" style="paint-order:stroke">N/A</text>
<circle cx="310.6" cy="128.9" r="8.2" fill="#ffff00" fill-opacity="0.78"/>
<text x="310.6" y="131.3" fill="#000" stroke="#fff" stroke-width="2.2" stroke-opacity="0.92" stroke-linejoin="round" style="paint-order:stroke">70</text>
</g>
</svg>
<div class="abs" style="left:343.68px;top:172.76px;width:24px;height:24px;background:#fff;transform:rotate(45deg) scale(0.82);box-shadow:0 3px 14px rgba(0,0,0,0.4);"></div>
<div class="abs" style="left:305.46px;top:51.84px;width:161.28px;height:133.92px;background:#fff;border-radius:12px;box-shadow:0 3px 14px rgba(0,0,0,0.4);"></div>
<div class="abs" style="left:343.68px;top:172.76px;width:24px;height:24px;background:#fff;transform:rotate(45deg) scale(0.82);"></div>
<div class="abs" style="left:305.46px;top:51.84px;width:161.28px;height:133.92px;color:#333;font-size:14px;">
<div class="abs" style="left:0;width:161.28px;text-align:center;top:14.04px;line-height:18px;white-space:nowrap;">Bishkek</div>
<div class="abs" style="left:0;width:161.28px;text-align:center;top:28.979999999999997px;line-height:18px;white-space:nowrap;">2021-02-27 7:00 PM</div>
<div class="abs" style="left:0;width:161.28px;text-align:center;top:44.1px;line-height:18px;white-space:nowrap;">(LT)</div>
<div class="abs" style="left:15.48px;top:60.66px;width:130.32px;height:27.36px;background:#044a84;"></div>
<div class="abs" style="left:15.48px;top:88.02px;width:83.16px;height:30.96px;background:#fff;border:1.5px solid #044a84;"></div>
<div class="abs" style="left:98.64px;top:88.02px;width:47.16px;height:30.96px;background:#ff7e00;border:1.5px solid #044a84;border-left:none;"></div>
<div class="abs" style="left:15.48px;top:60.66px;width:83.16px;height:27.36px;line-height:27.36px;text-align:center;color:#fff;font-weight:bold;">Pollutant</div>
<div class="abs" style="left:98.64px;top:60.66px;width:47.16px;height:27.36px;line-height:27.36px;text-align:center;color:#fff;font-weight:bold;">AQI</div>
<div class="abs" style="left:15.48px;top:88.02px;width:83.16px;height:30.96px;line-height:30.96px;text-align:center;">PM2.5</div>
<div class="abs" style="left:98.64px;top:88.02px;width:47.16px;height:30.96px;line-height:30.96px;text-align:center;color:#fff;font-weight:bold;font-size:13px;">111</div>
</div>
</div>
<div class="hd" style="left:754.2px;top:4.5px;width:333.54px;height:34.38px;"></div><div style="position:absolute;left:758.7px;top:11.88px;font-size:14px;line-height:18px;white-space:nowrap;color:#fff;">Select a City</div>
<div class="sel" style="left:754.2px;top:41.94px;width:333.54px;height:34.56px;"></div><div style="position:absolute;left:763.74px;top:49.32px;font-size:14px;line-height:18px;white-space:nowrap;color:#333;">Bishkek</div><div style="position:absolute;left:1050.3px;top:48.52px;font-size:15px;line-height:16px;white-space:nowrap;color:#999;">&times;</div><div class="abs" style="left:1068.3px;top:55.12px;width:0;height:0;border-left:4.5px solid transparent;border-right:4.5px solid transparent;border-top:4.2px solid #999;"></div>
<div class="hd" style="left:754.2px;top:99.0px;width:333.54px;height:34.2px;"></div><div style="position:absolute;left:758.7px;top:107.28px;font-size:14px;line-height:18px;white-space:nowrap;color:#fff;">Select a Parameter</div>
<div class="sel" style="left:754.2px;top:136.26px;width:333.54px;height:35.28px;"></div><div style="position:absolute;left:763.74px;top:142.92px;font-size:14px;line-height:18px;white-space:nowrap;color:#333;">PM2.5</div><div style="position:absolute;left:1050.3px;top:142.12px;font-size:15px;line-height:16px;white-space:nowrap;color:#999;">&times;</div><div class="abs" style="left:1068.3px;top:148.72px;width:0;height:0;border-left:4.5px solid transparent;border-right:4.5px solid transparent;border-top:4.2px solid #999;"></div>
<div class="abs" style="left:754.2px;top:192.06px;width:333.54px;height:72.36px;background:#fff;border:1.3px solid #c6c6c6;"></div>
<div style="position:absolute;left:763.74px;top:202.14px;font-size:14px;line-height:18px;white-space:nowrap;font-weight:bold;color:#333;">Bishkek</div>
<svg class="abs" style="left:1042.2px;top:219.06px" width="34.56" height="34.56" viewBox="0 0 32 32">
<rect width="32" height="32" fill="#f3b33c"/>
<circle cx="7.1" cy="25.3" r="2.9" fill="#fff"/>
<path d="M4.2 14.6 a13.6 13.6 0 0 1 13.6 13.6" fill="none" stroke="#fff" stroke-width="3.7"/>
<path d="M4.2 5.4 a22.8 22.8 0 0 1 22.8 22.8" fill="none" stroke="#fff" stroke-width="3.7"/>
</svg>
<div style="position:absolute;left:752.4px;top:278.20px;font-size:11px;line-height:16px;white-space:nowrap;color:#555;">Note: Values above 500 are considered Beyond the AQI. Follow</div>
<div style="position:absolute;left:752.4px;top:297.82px;font-size:11px;line-height:16px;white-space:nowrap;color:#555;">recommendations for the Hazardous category. Additional information</div>
<div style="position:absolute;left:752.4px;top:317.44px;font-size:11px;line-height:16px;white-space:nowrap;color:#555;">on reducing exposure to extremely high levels of particle pollution is</div>
<div style="position:absolute;left:752.4px;top:337.06px;font-size:11px;line-height:16px;white-space:nowrap;color:#555;">available <b style="color:#1b2a4a;text-decoration:underline;">here</b>.</div>
<div class="abs" style="left:19.62px;top:501.7px;width:1069.56px;height:1.3px;background:#9c9c9c;"></div>
<div class="tab" style="left:20.16px;top:471.6px;width:106.74px;height:31.14px;background:#fff;color:#333;border:1.3px solid #999;border-bottom:none;border-top:3px solid #044a84;"></div>
<div class="tab" style="left:130.5px;top:471.6px;width:165.06px;height:30.6px;"></div>
<div class="tab" style="left:300.42px;top:471.6px;width:136.44px;height:30.6px;"></div>
<div style="position:absolute;left:-226.56px;width:600px;text-align:center;top:480.60px;font-size:14px;line-height:18px;white-space:nowrap;color:#333;">AQI</div>
<div style="position:absolute;left:-87.06px;width:600px;text-align:center;top:480.42px;font-size:14px;line-height:18px;white-space:nowrap;color:#6a6a6a;">Concentration</div>
<div style="position:absolute;left:68.63999999999999px;width:600px;text-align:center;top:480.42px;font-size:14px;line-height:18px;white-space:nowrap;color:#6a6a6a;">Historical</div>
<div style="position:absolute;left:19.8px;top:513.72px;font-size:14px;line-height:18px;white-space:nowrap;color:#333;">Learn more about how the Air Quality Index [AQI] is calculated from the EPA <b style="color:#1b2a4a;text-decoration:underline;">here</b>.</div>
<div class="abs" style="left:19.62px;top:553.14px;width:800.46px;height:346.86px;background:#fff;overflow:hidden;"><svg width="800.46" height="346.86" viewBox="10.9 307.3 444.7 192.7" style="position:absolute;left:0;top:0;display:block">
<text x="44.3" y="445.10" text-anchor="end" font-family='"Liberation Sans", Arial, sans-serif' font-weight="bold" font-size="6.1" fill="#222">0</text>
<line x1="53.1" x2="450.4" y1="422.54" y2="422.54" stroke="#dfdfdf" stroke-width="0.6"/>
<text x="44.3" y="424.74" text-anchor="end" font-family='"Liberation Sans", Arial, sans-serif' font-weight="bold" font-size="6.1" fill="#222">100</text>
<line x1="53.1" x2="450.4" y1="402.18" y2="402.18" stroke="#dfdfdf" stroke-width="0.6"/>
<text x="44.3" y="404.38" text-anchor="end" font-family='"Liberation Sans", Arial, sans-serif' font-weight="bold" font-size="6.1" fill="#222">200</text>
<line x1="53.1" x2="450.4" y1="381.82" y2="381.82" stroke="#dfdfdf" stroke-width="0.6"/>
<text x="44.3" y="384.02" text-anchor="end" font-family='"Liberation Sans", Arial, sans-serif' font-weight="bold" font-size="6.1" fill="#222">300</text>
<line x1="53.1" x2="450.4" y1="361.46" y2="361.46" stroke="#dfdfdf" stroke-width="0.6"/>
<text x="44.3" y="363.66" text-anchor="end" font-family='"Liberation Sans", Arial, sans-serif' font-weight="bold" font-size="6.1" fill="#222">400</text>
<line x1="53.1" x2="450.4" y1="341.10" y2="341.10" stroke="#dfdfdf" stroke-width="0.6"/>
<text x="44.3" y="343.30" text-anchor="end" font-family='"Liberation Sans", Arial, sans-serif' font-weight="bold" font-size="6.1" fill="#222">500</text>
<rect x="57.08" y="411.85" width="8.6" height="31.05" fill="#ff0000" stroke="#000" stroke-opacity="0.85" stroke-width="0.55"/>
<rect x="73.63" y="410.43" width="8.6" height="32.47" fill="#ff0000" stroke="#000" stroke-opacity="0.85" stroke-width="0.55"/>
<rect x="90.19" y="409.41" width="8.6" height="33.49" fill="#ff0000" stroke="#000" stroke-opacity="0.85" stroke-width="0.55"/>
<rect x="106.74" y="407.17" width="8.6" height="35.73" fill="#ff0000" stroke="#000" stroke-opacity="0.85" stroke-width="0.55"/>
<rect x="123.29" y="408.59" width="8.6" height="34.31" fill="#ff0000" stroke="#000" stroke-opacity="0.85" stroke-width="0.55"/>
<rect x="139.85" y="407.17" width="8.6" height="35.73" fill="#ff0000" stroke="#000" stroke-opacity="0.85" stroke-width="0.55"/>
<rect x="156.40" y="403.91" width="8.6" height="38.99" fill="#ff0000" stroke="#000" stroke-opacity="0.85" stroke-width="0.55"/>
<rect x="172.96" y="403.10" width="8.6" height="39.80" fill="#ff0000" stroke="#000" stroke-opacity="0.85" stroke-width="0.55"/>
<rect x="189.51" y="403.10" width="8.6" height="39.80" fill="#ff0000" stroke="#000" stroke-opacity="0.85" stroke-width="0.55"/>
<rect x="206.06" y="406.56" width="8.6" height="36.34" fill="#ff0000" stroke="#000" stroke-opacity="0.85" stroke-width="0.55"/>
<rect x="222.62" y="407.17" width="8.6" height="35.73" fill="#ff0000" stroke="#000" stroke-opacity="0.85" stroke-width="0.55"/>
<rect x="239.17" y="407.58" width="8.6" height="35.32" fill="#ff0000" stroke="#000" stroke-opacity="0.85" stroke-width="0.55"/>
<rect x="255.73" y="406.15" width="8.6" height="36.75" fill="#ff0000" stroke="#000" stroke-opacity="0.85" stroke-width="0.55"/>
<rect x="272.28" y="403.10" width="8.6" height="39.80" fill="#ff0000" stroke="#000" stroke-opacity="0.85" stroke-width="0.55"/>
<rect x="288.84" y="398.01" width="8.6" height="44.89" fill="#99004c" stroke="#000" stroke-opacity="0.85" stroke-width="0.55"/>
<rect x="305.39" y="399.23" width="8.6" height="43.67" fill="#99004c" stroke="#000" stroke-opacity="0.85" stroke-width="0.55"/>
<rect x="321.94" y="403.10" width="8.6" height="39.80" fill="#ff0000" stroke="#000" stroke-opacity="0.85" stroke-width="0.55"/>
<rect x="338.50" y="403.91" width="8.6" height="38.99" fill="#ff0000" stroke="#000" stroke-opacity="0.85" stroke-width="0.55"/>
<rect x="355.05" y="398.01" width="8.6" height="44.89" fill="#99004c" stroke="#000" stroke-opacity="0.85" stroke-width="0.55"/>
<rect x="371.61" y="401.67" width="8.6" height="41.23" fill="#99004c" stroke="#000" stroke-opacity="0.85" stroke-width="0.55"/>
<rect x="388.16" y="407.17" width="8.6" height="35.73" fill="#ff0000" stroke="#000" stroke-opacity="0.85" stroke-width="0.55"/>
<rect x="404.71" y="411.85" width="8.6" height="31.05" fill="#ff0000" stroke="#000" stroke-opacity="0.85" stroke-width="0.55"/>
<rect x="421.27" y="418.26" width="8.6" height="24.64" fill="#ff7e00" stroke="#000" stroke-opacity="0.85" stroke-width="0.55"/>
<rect x="437.82" y="420.30" width="8.6" height="22.60" fill="#ff7e00" stroke="#000" stroke-opacity="0.85" stroke-width="0.55"/>
<line x1="53.1" x2="450.4" y1="442.9" y2="442.9" stroke="#ccd6eb" stroke-width="0.6"/>
<line x1="53.10" x2="53.10" y1="442.9" y2="448.4" stroke="#ccd6eb" stroke-width="0.6"/>
<line x1="69.65" x2="69.65" y1="442.9" y2="448.4" stroke="#ccd6eb" stroke-width="0.6"/>
<line x1="86.21" x2="86.21" y1="442.9" y2="448.4" stroke="#ccd6eb" stroke-width="0.6"/>
<line x1="102.76" x2="102.76" y1="442.9" y2="448.4" stroke="#ccd6eb" stroke-width="0.6"/>
<line x1="119.32" x2="119.32" y1="442.9" y2="448.4" stroke="#ccd6eb" stroke-width="0.6"/>
<line x1="135.87" x2="135.87" y1="442.9" y2="448.4" stroke="#ccd6eb" stroke-width="0.6"/>
<line x1="152.42" x2="152.42" y1="442.9" y2="448.4" stroke="#ccd6eb" stroke-width="0.6"/>
<line x1="168.98" x2="168.98" y1="442.9" y2="448.4" stroke="#ccd6eb" stroke-width="0.6"/>
<line x1="185.53" x2="185.53" y1="442.9" y2="448.4" stroke="#ccd6eb" stroke-width="0.6"/>
<line x1="202.09" x2="202.09" y1="442.9" y2="448.4" stroke="#ccd6eb" stroke-width="0.6"/>
<line x1="218.64" x2="218.64" y1="442.9" y2="448.4" stroke="#ccd6eb" stroke-width="0.6"/>
<line x1="235.20" x2="235.20" y1="442.9" y2="448.4" stroke="#ccd6eb" stroke-width="0.6"/>
<line x1="251.75" x2="251.75" y1="442.9" y2="448.4" stroke="#ccd6eb" stroke-width="0.6"/>
<line x1="268.30" x2="268.30" y1="442.9" y2="448.4" stroke="#ccd6eb" stroke-width="0.6"/>
<line x1="284.86" x2="284.86" y1="442.9" y2="448.4" stroke="#ccd6eb" stroke-width="0.6"/>
<line x1="301.41" x2="301.41" y1="442.9" y2="448.4" stroke="#ccd6eb" stroke-width="0.6"/>
<line x1="317.97" x2="317.97" y1="442.9" y2="448.4" stroke="#ccd6eb" stroke-width="0.6"/>
<line x1="334.52" x2="334.52" y1="442.9" y2="448.4" stroke="#ccd6eb" stroke-width="0.6"/>
<line x1="351.07" x2="351.07" y1="442.9" y2="448.4" stroke="#ccd6eb" stroke-width="0.6"/>
<line x1="367.63" x2="367.63" y1="442.9" y2="448.4" stroke="#ccd6eb" stroke-width="0.6"/>
<line x1="384.18" x2="384.18" y1="442.9" y2="448.4" stroke="#ccd6eb" stroke-width="0.6"/>
<line x1="400.74" x2="400.74" y1="442.9" y2="448.4" stroke="#ccd6eb" stroke-width="0.6"/>
<line x1="417.29" x2="417.29" y1="442.9" y2="448.4" stroke="#ccd6eb" stroke-width="0.6"/>
<line x1="433.85" x2="433.85" y1="442.9" y2="448.4" stroke="#ccd6eb" stroke-width="0.6"/>
<line x1="450.40" x2="450.40" y1="442.9" y2="448.4" stroke="#ccd6eb" stroke-width="0.6"/>
<text transform="translate(63.08,450.90) rotate(-45)" text-anchor="end" font-family='"DejaVu Sans", "Liberation Sans", sans-serif' font-size="6.15" fill="#666">8 PM</text>
<text transform="translate(79.63,450.90) rotate(-45)" text-anchor="end" font-family='"DejaVu Sans", "Liberation Sans", sans-serif' font-size="6.15" fill="#666">9 PM</text>
<text transform="translate(96.19,450.90) rotate(-45)" text-anchor="end" font-family='"DejaVu Sans", "Liberation Sans", sans-serif' font-size="6.15" fill="#666">10 PM</text>
<text transform="translate(112.74,450.90) rotate(-45)" text-anchor="end" font-family='"DejaVu Sans", "Liberation Sans", sans-serif' font-size="6.15" fill="#666">11 PM</text>
<text transform="translate(129.29,450.90) rotate(-45)" text-anchor="end" font-family='"DejaVu Sans", "Liberation Sans", sans-serif' font-size="6.15" fill="#666">Feb 27, 2021 12 AM</text>
<text transform="translate(145.85,450.90) rotate(-45)" text-anchor="end" font-family='"DejaVu Sans", "Liberation Sans", sans-serif' font-size="6.15" fill="#666">1 AM</text>
<text transform="translate(162.40,450.90) rotate(-45)" text-anchor="end" font-family='"DejaVu Sans", "Liberation Sans", sans-serif' font-size="6.15" fill="#666">2 AM</text>
<text transform="translate(178.96,450.90) rotate(-45)" text-anchor="end" font-family='"DejaVu Sans", "Liberation Sans", sans-serif' font-size="6.15" fill="#666">3 AM</text>
<text transform="translate(195.51,450.90) rotate(-45)" text-anchor="end" font-family='"DejaVu Sans", "Liberation Sans", sans-serif' font-size="6.15" fill="#666">4 AM</text>
<text transform="translate(212.06,450.90) rotate(-45)" text-anchor="end" font-family='"DejaVu Sans", "Liberation Sans", sans-serif' font-size="6.15" fill="#666">5 AM</text>
<text transform="translate(228.62,450.90) rotate(-45)" text-anchor="end" font-family='"DejaVu Sans", "Liberation Sans", sans-serif' font-size="6.15" fill="#666">6 AM</text>
<text transform="translate(245.17,450.90) rotate(-45)" text-anchor="end" font-family='"DejaVu Sans", "Liberation Sans", sans-serif' font-size="6.15" fill="#666">7 AM</text>
<text transform="translate(261.73,450.90) rotate(-45)" text-anchor="end" font-family='"DejaVu Sans", "Liberation Sans", sans-serif' font-size="6.15" fill="#666">8 AM</text>
<text transform="translate(278.28,450.90) rotate(-45)" text-anchor="end" font-family='"DejaVu Sans", "Liberation Sans", sans-serif' font-size="6.15" fill="#666">9 AM</text>
<text transform="translate(294.84,450.90) rotate(-45)" text-anchor="end" font-family='"DejaVu Sans", "Liberation Sans", sans-serif' font-size="6.15" fill="#666">10 AM</text>
<text transform="translate(311.39,450.90) rotate(-45)" text-anchor="end" font-family='"DejaVu Sans", "Liberation Sans", sans-serif' font-size="6.15" fill="#666">11 AM</text>
<text transform="translate(327.94,450.90) rotate(-45)" text-anchor="end" font-family='"DejaVu Sans", "Liberation Sans", sans-serif' font-size="6.15" fill="#666">12 PM</text>
<text transform="translate(344.50,450.90) rotate(-45)" text-anchor="end" font-family='"DejaVu Sans", "Liberation Sans", sans-serif' font-size="6.15" fill="#666">1 PM</text>
<text transform="translate(361.05,450.90) rotate(-45)" text-anchor="end" font-family='"DejaVu Sans", "Liberation Sans", sans-serif' font-size="6.15" fill="#666">2 PM</text>
<text transform="translate(377.61,450.90) rotate(-45)" text-anchor="end" font-family='"DejaVu Sans", "Liberation Sans", sans-serif' font-size="6.15" fill="#666">3 PM</text>
<text transform="translate(394.16,450.90) rotate(-45)" text-anchor="end" font-family='"DejaVu Sans", "Liberation Sans", sans-serif' font-size="6.15" fill="#666">4 PM</text>
<text transform="translate(410.71,450.90) rotate(-45)" text-anchor="end" font-family='"DejaVu Sans", "Liberation Sans", sans-serif' font-size="6.15" fill="#666">5 PM</text>
<text transform="translate(427.27,450.90) rotate(-45)" text-anchor="end" font-family='"DejaVu Sans", "Liberation Sans", sans-serif' font-size="6.15" fill="#666">6 PM</text>
<text transform="translate(443.82,450.90) rotate(-45)" text-anchor="end" font-family='"DejaVu Sans", "Liberation Sans", sans-serif' font-size="6.15" fill="#666">7 PM</text>
<text x="233.3" y="320.7" text-anchor="middle" font-family='"DejaVu Sans", "Liberation Sans", sans-serif' font-size="9.9" fill="#333">Bishkek - PM2.5</text>
<text transform="translate(26.8,390.2) rotate(-90)" text-anchor="middle" font-family='"Liberation Sans", Arial, sans-serif' font-weight="bold" font-size="6.67" fill="#222">AQI</text>
</svg></div>
<div class="abs" style="left:836.82px;top:553.14px;width:252.36px;height:341.28px;background:#eee;border:1.5px solid #044a84;"></div>
<div class="abs" style="left:836.82px;top:553.14px;width:252.36px;height:74.88px;background:#044a84;"></div>
<div class="abs" style="left:838.32px;top:628.02px;width:249.36px;height:143.46px;background:#ff7e00;"></div>
<div style="position:absolute;left:663.0px;width:600px;text-align:center;top:559.52px;font-size:15px;line-height:20px;white-space:nowrap;color:#fff;font-weight:bold;">Current Conditions</div>
<div style="position:absolute;left:663.0px;width:600px;text-align:center;top:582.58px;font-size:12px;line-height:16px;white-space:nowrap;color:#fff;font-weight:bold;">observed at</div>
<div style="position:absolute;left:663.0px;width:600px;text-align:center;top:602.54px;font-size:15px;line-height:20px;white-space:nowrap;color:#fff;font-weight:bold;">Feb 27, 2021 7:00 PM (LT)</div>
<div style="position:absolute;left:663.0px;width:600px;text-align:center;top:644.54px;font-size:20px;line-height:26px;white-space:nowrap;color:#fff;font-weight:bold;">111 AQI</div>
<div style="position:absolute;left:663.0px;width:600px;text-align:center;top:673.34px;font-size:20px;line-height:26px;white-space:nowrap;color:#fff;font-weight:bold;">Unhealthy for Sensitive</div>
<div style="position:absolute;left:663.0px;width:600px;text-align:center;top:701.96px;font-size:20px;line-height:26px;white-space:nowrap;color:#fff;font-weight:bold;">Groups</div>
<div style="position:absolute;left:663.0px;width:600px;text-align:center;top:729.68px;font-size:20px;line-height:26px;white-space:nowrap;color:#fff;font-weight:bold;">PM2.5</div>
<div style="position:absolute;left:663.0px;width:600px;text-align:center;top:781.30px;font-size:12px;line-height:16px;white-space:nowrap;color:#222;font-weight:bold;">Health Message</div>
<div style="position:absolute;left:842.94px;top:805.24px;font-size:12px;line-height:16px;white-space:nowrap;color:#555;">When AQI values are between 101 and 150,</div>
<div style="position:absolute;left:842.94px;top:825.99px;font-size:12px;line-height:16px;white-space:nowrap;color:#555;">members of sensitive groups may</div>
<div style="position:absolute;left:842.94px;top:846.75px;font-size:12px;line-height:16px;white-space:nowrap;color:#555;">experience health effects, but the general</div>
<div style="position:absolute;left:842.94px;top:867.50px;font-size:12px;line-height:16px;white-space:nowrap;color:#555;">public is unlikely to be affected.</div>
</div></body></html>
